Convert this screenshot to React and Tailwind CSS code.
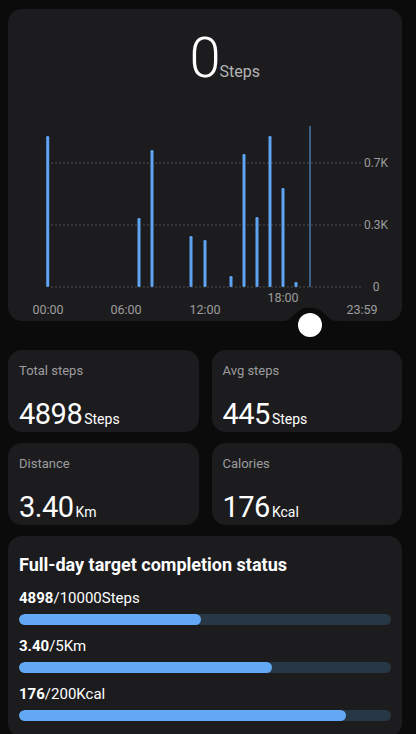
import React from "react";

const bars = [
  { x: 39.7, top: 36 },
  { x: 131, top: 118 },
  { x: 144, top: 50 },
  { x: 183, top: 136 },
  { x: 197, top: 140 },
  { x: 223, top: 176 },
  { x: 236, top: 54 },
  { x: 249, top: 117 },
  { x: 262, top: 36 },
  { x: 275, top: 88 },
  { x: 288, top: 182 },
];

const gridLines = [
  { y: 63, label: "0.7K" },
  { y: 125, label: "0.3K" },
  { y: 187, label: "0" },
];

const timeLabels = [
  { x: 40, y: 214, text: "00:00" },
  { x: 118, y: 214, text: "06:00" },
  { x: 197, y: 214, text: "12:00" },
  { x: 275, y: 202, text: "18:00" },
  { x: 354, y: 214, text: "23:59" },
];

const StepChart = () => (
  <svg width="394" height="221" viewBox="0 0 394 221" className="block overflow-visible">
    {gridLines.map((g) => (
      <g key={g.label}>
        <line x1="43" x2="355" y1={g.y} y2={g.y} stroke="#4d4d50" strokeWidth="1" strokeDasharray="2 2" />
        <text x="368" y={g.y + 4} textAnchor="middle" fontSize="12" fill="#9c9c9e" fontFamily="Roboto, sans-serif">
          {g.label}
        </text>
      </g>
    ))}
    {bars.map((b, i) => (
      <rect key={i} x={b.x - 1.5} y={b.top} width="3" height={187 - b.top} rx="1.3" fill="#5fa4f2" />
    ))}
    <line x1="302" x2="302" y1="26" y2="187" stroke="#5fa4f2" strokeWidth="1" />
    {timeLabels.map((t) => (
      <text key={t.text} x={t.x} y={t.y} textAnchor="middle" fontSize="12.5" fill="#9c9c9e" fontFamily="Roboto, sans-serif">
        {t.text}
      </text>
    ))}
    {/* notch under the slider knob */}
    <path d="M270 222 C287 222 286 207.5 302 207.5 C318 207.5 317 222 334 222 Z" fill="#0b0b0b" />
  </svg>
);

const StatCard = ({ label, value, unit }) => (
  <div className="h-[82px] rounded-[14px] bg-[#1c1c1e] pl-[11px] pt-[14px] pb-[3px] flex flex-col justify-between">
    <div className="text-[13px] leading-none text-[#9c9c9e]">{label}</div>
    <div className="flex items-baseline">
      <span className="text-[29px] leading-none tracking-[-0.5px] text-white">{value}</span>
      <span className="ml-[2px] text-[14px] leading-none text-white">{unit}</span>
    </div>
  </div>
);

const Progress = ({ value, total, pct }) => (
  <div className="mt-[14px] first:mt-0">
    <div className="text-[15px] leading-none text-white">
      <span className="font-bold">{value}</span>
      {total}
    </div>
    <div className="mt-[8px] h-[11px] rounded-full bg-[#283746] overflow-hidden">
      <div className="h-full rounded-full bg-[#62a8f5]" style={{ width: `${pct}%` }}></div>
    </div>
  </div>
);

export default function App() {
  return (
    <div className="min-h-screen bg-[#0b0b0b] pl-2 pr-[14px] pt-[9px] font-['Roboto',sans-serif]">
      {/* Daily steps chart */}
      <div className="relative h-[312px] rounded-[14px] bg-[#1c1c1e] flex flex-col">
        <div className="h-[91px] pt-[21px] grid grid-cols-[1fr_auto_1fr] items-baseline">
          <span></span>
          <span className="text-[56px] font-light leading-none text-white">0</span>
          <span className="-ml-[1px] text-[16px] leading-none text-[#b3b3b5]">Steps</span>
        </div>
        <StepChart />
        <div className="absolute left-[290px] top-[304px] h-6 w-6 rounded-full bg-white"></div>
      </div>

      {/* Summary cards */}
      <div className="mt-[29px] grid grid-cols-2 gap-x-[13px] gap-y-[11px]">
        <StatCard label="Total steps" value="4898" unit="Steps" />
        <StatCard label="Avg steps" value="445" unit="Steps" />
        <StatCard label="Distance" value="3.40" unit="Km" />
        <StatCard label="Calories" value="176" unit="Kcal" />
      </div>

      {/* Targets */}
      <div className="mt-[11px] rounded-[14px] bg-[#1c1c1e] px-[11px] pt-[20px] pb-[16px]">
        <div className="text-[18px] font-bold leading-none text-white">Full-day target completion status</div>
        <div className="mt-[17px]">
          <Progress value="4898" total="/10000Steps" pct={49} />
          <Progress value="3.40" total="/5Km" pct={68} />
          <Progress value="176" total="/200Kcal" pct={88} />
        </div>
      </div>
    </div>
  );
}
